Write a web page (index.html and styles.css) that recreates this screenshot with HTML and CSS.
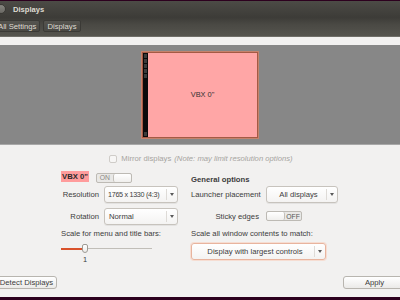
FILE: index.html
```html
<!DOCTYPE html>
<html>
<head>
<meta charset="utf-8">
<link rel="stylesheet" href="styles.css">
</head>
<body>
<div class="window">
  <header class="titlebar">
    <span class="close"></span>
    <span class="title">Displays</span>
  </header>
  <nav class="toolbar">
    <span class="crumb first">All Settings</span>
    <span class="crumb">Displays</span>
  </nav>
  <main class="content">
    <section class="preview">
      <div class="monitor">
        <div class="launcher">
          <i></i><i></i><i></i><i></i><i></i><span class="spacer"></span><i></i>
        </div>
        <div class="screen">VBX 0"</div>
      </div>
    </section>
    <div class="mirror">
      <span class="checkbox"></span>
      <span>Mirror displays</span>
      <em>(Note: may limit resolution options)</em>
    </div>
    <section class="settings">
      <div class="col col-left">
        <div class="span head">
          <span class="display-name">VBX 0"</span>
          <span class="switch on"><span class="sw-text">ON</span><span class="knob"></span></span>
        </div>
        <span class="label">Resolution</span>
        <div class="combo"><span class="combo-text tight">1765 x 1330 (4:3)</span><span class="arrow"></span></div>
        <span class="label">Rotation</span>
        <div class="combo"><span class="combo-text">Normal</span><span class="arrow"></span></div>
        <span class="span text">Scale for menu and title bars:</span>
        <div class="span slider-cell">
          <div class="slider">
            <span class="fill"></span>
            <span class="knob-s"></span>
          </div>
          <span class="value">1</span>
        </div>
      </div>
      <div class="col col-right">
        <span class="span head bold">General options</span>
        <span class="label left">Launcher placement</span>
        <div class="combo center"><span class="combo-text">All displays</span><span class="arrow"></span></div>
        <span class="label">Sticky edges</span>
        <div class="switch-cell"><span class="switch off"><span class="knob"></span><span class="sw-text">OFF</span></span></div>
        <span class="span text">Scale all window contents to match:</span>
        <div class="span combo wide center focus"><span class="combo-text">Display with largest controls</span><span class="arrow"></span></div>
      </div>
    </section>
    <footer class="actions">
      <span class="button detect">Detect Displays</span>
      <span class="button apply">Apply</span>
    </footer>
  </main>
</div>
</body>
</html>
```
FILE: styles.css
```css
* { box-sizing: border-box; }
html, body { margin: 0; padding: 0; }
body {
  width: 400px;
  height: 300px;
  overflow: hidden;
  background: #2c001e;
  font-family: "Liberation Sans", Arial, sans-serif;
  font-size: 7.7px;
  color: #3c3c3c;
}
.window {
  height: 297px;
  display: flex;
  flex-direction: column;
  background: #f2f1f0;
  overflow: hidden;
  white-space: nowrap;
}
.titlebar {
  height: 17px;
  border-top: 1px solid #2c001e;
  background: linear-gradient(#4c4b46, #3d3c38);
  display: flex;
  align-items: center;
}
.close {
  width: 10px;
  height: 10px;
  border-radius: 50%;
  margin-left: -4px;
  background: linear-gradient(#86857f, #6a6964);
  border: 1px solid #3a3935;
}
.title {
  margin-left: 7px;
  font-weight: bold;
  font-size: 7.6px;
  color: #dfdbd2;
}
.toolbar {
  height: 20px;
  background: linear-gradient(#3c3b37, #4a4944 40%, #55544e);
  border-bottom: 1px solid #6f6e68;
  display: flex;
  align-items: center;
  gap: 3px;
  padding-bottom: 1px;
}
.crumb {
  height: 12px;
  padding: 0 3px;
  display: flex;
  align-items: center;
  color: #dfdbd2;
  font-size: 7.7px;
  border: 1px solid #3b3a36;
  border-radius: 2px;
  background: linear-gradient(#55544f, #4a4944);
}
.crumb.first { margin-left: -6px; }
.content {
  flex: 1;
  display: flex;
  flex-direction: column;
  padding-top: 8px;
}
.preview {
  height: 100px;
  background: #878787;
  border-bottom: 1px solid #a8a8a8;
  display: flex;
  align-items: center;
  justify-content: center;
}
.monitor {
  width: 116px;
  height: 86px;
  display: flex;
  border: 1px solid #a45a45;
  box-shadow: 0 0 0 1px #c4826c;
  background: #ffa6a6;
}
.launcher {
  width: 5px;
  background: #0a0a0a;
  display: flex;
  flex-direction: column;
  gap: 1px;
  padding: 1px 0;
}
.launcher i {
  display: block;
  height: 4px;
  margin: 0 1px;
  background: #3a3a3a;
}
.launcher .spacer { flex: 1; }
.screen {
  flex: 1;
  display: flex;
  align-items: center;
  justify-content: center;
  color: #333;
  font-size: 7.4px;
}
.mirror {
  margin-top: 9px;
  height: 9px;
  display: flex;
  align-items: center;
  justify-content: center;
  gap: 3px;
  color: #a6a4a0;
  padding-left: 2px;
}
.mirror em { font-style: italic; }
.checkbox {
  width: 8px;
  height: 8px;
  border: 1px solid #cfccc8;
  border-radius: 2px;
  background: #f7f6f5;
  margin-right: 1px;
}
.settings {
  margin-top: 8px;
  display: flex;
  gap: 13px;
  padding-left: 61px;
}
.col {
  display: grid;
  grid-template-rows: 15px 22px 19px 13px 20px;
  align-items: start;
}
.col-left { grid-template-columns: 38px 74px; column-gap: 5px; }
.col-right { grid-template-columns: 68px 72px; column-gap: 7px; }
.span { grid-column: 1 / -1; }
.head {
  display: flex;
  align-items: center;
  gap: 7px;
  height: 13px;
  margin-top: -1px;
}
.bold { font-weight: bold; margin-top: 2px; }
.display-name {
  background: #ff9c9c;
  font-weight: bold;
  color: #2a2a2a;
  height: 11px;
  display: flex;
  align-items: center;
  padding: 0 1px;
}
.switch {
  display: flex;
  width: 36px;
  height: 10px;
  border: 1px solid #bdbab4;
  border-radius: 2px;
  background: #e9e8e6;
  overflow: hidden;
}
.switch.on { margin-top: 2px; }
.sw-text {
  flex: 1;
  display: flex;
  align-items: center;
  justify-content: center;
  font-size: 6.8px;
  color: #8b8984;
}
.switch.off .sw-text { color: #555; }
.knob {
  width: 18px;
  background: linear-gradient(#ffffff, #f0efed);
  border-left: 1px solid #c2bfb9;
  border-radius: 2px;
}
.switch.off .knob { border-left: none; border-right: 1px solid #c2bfb9; }
.label {
  justify-self: end;
  height: 17px;
  display: flex;
  align-items: center;
}
.label.left { justify-self: start; }
.combo {
  height: 17px;
  display: flex;
  align-items: center;
  border: 1px solid #c7c3bd;
  border-radius: 3px;
  background: linear-gradient(#ffffff, #f4f3f2);
  box-shadow: 0 1px 0 rgba(0,0,0,0.06);
}
.combo-text {
  flex: 1;
  padding-left: 4px;
  white-space: nowrap;
  overflow: hidden;
}
.combo-text.tight {
  font-size: 7.2px;
  letter-spacing: -0.3px;
  padding-left: 3px;
}
.combo.center .combo-text { text-align: center; padding-left: 4px; }
.arrow {
  flex: none;
  width: 11px;
  height: 11px;
  border-left: 1px solid #dedbd7;
  display: flex;
  align-items: center;
  justify-content: center;
}
.arrow::after {
  content: "";
  border-left: 2.5px solid transparent;
  border-right: 2.5px solid transparent;
  border-top: 3px solid #5a5a5a;
}
.switch-cell { height: 19px; padding-top: 3px; }
.text {
  height: 13px;
  display: flex;
  align-items: center;
}
.slider-cell {
  display: flex;
  flex-direction: column;
  width: 91px;
  padding-top: 4px;
}
.slider {
  height: 9px;
  display: flex;
  align-items: center;
  background: linear-gradient(#c1beb8, #c1beb8) 0 50% / 100% 1px no-repeat;
}
.fill {
  width: 21px;
  height: 2px;
  background: #d9522b;
}
.knob-s {
  width: 6px;
  height: 9px;
  border: 1px solid #9e9b95;
  border-radius: 2px 2px 3px 3px;
  background: linear-gradient(#ffffff, #ecebe9);
}
.value {
  margin-top: 2px;
  padding-left: 22px;
  font-size: 7.4px;
}
.wide {
  width: 135px;
  margin-top: 3px;
}
.focus {
  border-color: #e8b49e;
  box-shadow: 0 0 0 1px #f6ddd2;
}
.actions {
  margin-top: auto;
  margin-bottom: 8px;
  display: flex;
  justify-content: space-between;
}
.button {
  height: 13px;
  display: flex;
  align-items: center;
  justify-content: center;
  border: 1px solid #b8b5af;
  border-radius: 3px;
  background: linear-gradient(#ffffff, #ebeae8);
}
.detect { margin-left: -4px; width: 61px; }
.apply { width: 63px; margin-right: -6px; }
```
